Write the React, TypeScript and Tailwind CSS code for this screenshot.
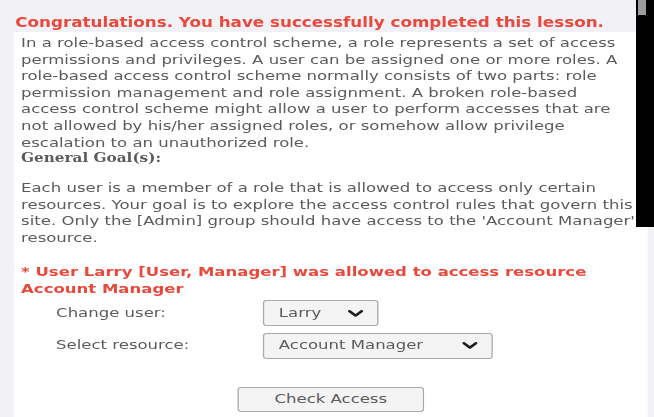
function Chevron() {
  return (
    <svg width="12" height="7" viewBox="0 0 12 7" fill="none" className="text-[#1e1e1e]">
      <path d="M1.2 1.2 6 5.6l4.8-4.4" stroke="currentColor" strokeWidth="2.4" strokeLinecap="round" strokeLinejoin="round" />
    </svg>
  )
}

function Select({ value, width }: { value: string; width: string }) {
  return (
    <div
      className={`${width} h-[26px] flex items-center justify-between pl-[12px] pr-[11px] border border-[#a9a9a9] rounded-[3px] bg-[#f4f4f4] text-[#5b5b5b]`}
    >
      <span>{value}</span>
      <Chevron />
    </div>
  )
}

export default function App() {
  return (
    <div className="relative w-[654px] h-[417px] overflow-hidden bg-[#f1f1f6]">
      {/* screenshot is stretched horizontally, so the page is laid out narrow and scaled */}
      <div className="w-[515px] origin-top-left scale-x-[1.27] pt-[14px] font-['DejaVu_Sans',sans-serif] text-[13px] text-[#5b5b5b]">
        <h2 className="pl-[12px] text-[13.2px] font-bold text-[#e9493c] leading-[17px]">
          Congratulations. You have successfully completed this lesson.
        </h2>
        <div className="mt-[1px] ml-[10.6px] w-[499px] bg-white pt-[3px] pl-[6px] pr-[1.5px] pb-[10px] leading-[16.6px]">
          <p className="mr-[12px]">
            In a role-based access control scheme, a role represents a set of access permissions and privileges. A
            user can be assigned one or more roles. A role-based access control scheme normally consists of two parts:
            role permission management and role assignment. A broken role-based access control scheme might allow a
            user to perform accesses that are not allowed by his/her assigned roles, or somehow allow privilege
            escalation to an unauthorized role.
          </p>
          <div className="font-['DejaVu_Serif',serif] font-bold text-[12px] leading-[14px]">General Goal(s):</div>
          <p className="mt-[15px]">
            Each user is a member of a role that is allowed to access only certain resources. Your goal is to explore
            the access control rules that govern this site. Only the [Admin] group should have access to the 'Account
            Manager' resource.
          </p>
          <p className="mt-[17.4px] font-bold text-[#e9493c]">
            * User Larry [User, Manager] was allowed to access resource Account Manager
          </p>
          <div className="mt-[3px] pl-[27.6px] grid grid-cols-[162.4px_auto] gap-y-[6.5px] items-center">
            <span>Change user:</span>
            <Select value="Larry" width="w-[91.3px]" />
            <span>Select resource:</span>
            <Select value="Account Manager" width="w-[181px]" />
          </div>
          <div className="mt-[28.4px] flex">
            <button className="ml-[170.4px] w-[147px] h-[25px] border border-[#a9a9a9] rounded-[3px] bg-[#f4f4f4] text-[#5b5b5b]">
              Check Access
            </button>
          </div>
        </div>
      </div>
      <div className="absolute right-0 top-0 w-[18px] h-[227px] bg-black">
        <div className="ml-[2px] w-[8px] h-[15px] bg-[#9d9d9d]" />
      </div>
    </div>
  )
}
